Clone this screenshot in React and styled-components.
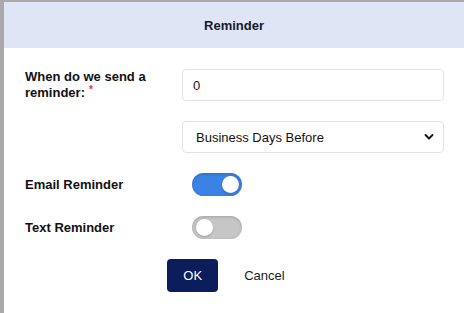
import React, { useState } from 'react'
import styled, { createGlobalStyle } from 'styled-components'

const GlobalStyle = createGlobalStyle`
  html, body {
    margin: 0;
    padding: 0;
    background: #a9a9a9;
    font-family: "Liberation Sans", Arial, sans-serif;
  }
`

const Modal = styled.div`
  margin: 2px 0 0 4px;
  width: 460px;
  min-height: 311px;
  background: #fff;
  display: flex;
  flex-direction: column;
`

const Header = styled.div`
  flex-shrink: 0;
  height: 46px;
  background: #dfe5f5;
  display: flex;
  align-items: center;
  justify-content: center;
  font-size: 13px;
  font-weight: bold;
  color: #141a2c;
`

const Body = styled.div`
  padding: 21px 20px 20px 21px;
  display: grid;
  grid-template-columns: 157px 1fr;
  row-gap: 20px;
  align-items: center;
`

const Label = styled.label`
  font-size: 13px;
  font-weight: bold;
  line-height: 16px;
  color: #111;
  padding-right: 10px;

  &::after {
    content: ${({ $required }) => ($required ? "'*'" : 'none')};
    color: #e0301e;
    font-size: 10px;
    line-height: 10px;
    vertical-align: top;
    margin-left: 4px;
  }
`

const Field = styled.div`
  grid-column: ${({ $full }) => ($full ? '2 / 3' : 'auto')};
  position: relative;
`

const SwitchCell = styled.div`
  display: flex;
  align-items: center;
  padding-left: 10px;
`

const Input = styled.input`
  box-sizing: border-box;
  width: 100%;
  height: 32px;
  border: 1px solid #e3e3e3;
  border-radius: 4px;
  padding: 0 10px;
  font-family: inherit;
  font-size: 13px;
  color: #111;
  outline: none;
`

const Select = styled.select`
  box-sizing: border-box;
  width: 100%;
  height: 32px;
  border: 1px solid #e3e3e3;
  border-radius: 4px;
  padding: 0 13px;
  font-family: inherit;
  font-size: 13px;
  color: #111;
  background: #fff;
  appearance: none;
  outline: none;
`

const Chevron = styled.svg`
  position: absolute;
  right: 10px;
  top: 12px;
  pointer-events: none;
`

const Switch = styled.button`
  position: relative;
  display: block;
  width: 50px;
  height: 23px;
  border: none;
  border-radius: 12px;
  padding: 0;
  cursor: pointer;
  background: ${({ $on }) => ($on ? '#3a82e4' : '#c6c6c6')};
  box-shadow: inset 0 1px 3px rgba(0, 0, 0, 0.18);

  &::after {
    content: '';
    position: absolute;
    top: 3px;
    left: ${({ $on }) => ($on ? '30px' : '4px')};
    width: 17px;
    height: 17px;
    border-radius: 50%;
    background: #fff;
    box-shadow: 0 1px 2px rgba(0, 0, 0, 0.2);
  }
`

const Actions = styled.div`
  grid-column: 1 / 3;
  display: flex;
  justify-content: center;
  gap: 10px;
  margin-left: -1px;
`

const Button = styled.button`
  height: 33px;
  padding: 0 16px;
  border: none;
  border-radius: 4px;
  font-family: inherit;
  font-size: 13px;
  cursor: pointer;
  background: ${({ $primary }) => ($primary ? '#0b1d5b' : 'transparent')};
  color: ${({ $primary }) => ($primary ? '#fff' : '#1a1a1a')};
`

export default function App() {
  const [email, setEmail] = useState(true)
  const [text, setText] = useState(false)

  return (
    <>
      <GlobalStyle />
      <Modal>
        <Header>Reminder</Header>
        <Body>
          <Label $required>When do we send a reminder:</Label>
          <Field>
            <Input defaultValue="0" />
          </Field>

          <Field $full>
            <Select defaultValue="bdb">
              <option value="bdb">Business Days Before</option>
              <option value="cdb">Calendar Days Before</option>
            </Select>
            <Chevron width="10" height="8" viewBox="0 0 10 8">
              <path d="M1.5 2 L5 5.5 L8.5 2" fill="none" stroke="#111" strokeWidth="1.8" strokeLinecap="round" strokeLinejoin="round" />
            </Chevron>
          </Field>

          <Label>Email Reminder</Label>
          <SwitchCell>
            <Switch $on={email} onClick={() => setEmail(!email)} />
          </SwitchCell>

          <Label>Text Reminder</Label>
          <SwitchCell>
            <Switch $on={text} onClick={() => setText(!text)} />
          </SwitchCell>

          <Actions>
            <Button $primary>OK</Button>
            <Button>Cancel</Button>
          </Actions>
        </Body>
      </Modal>
    </>
  )
}
